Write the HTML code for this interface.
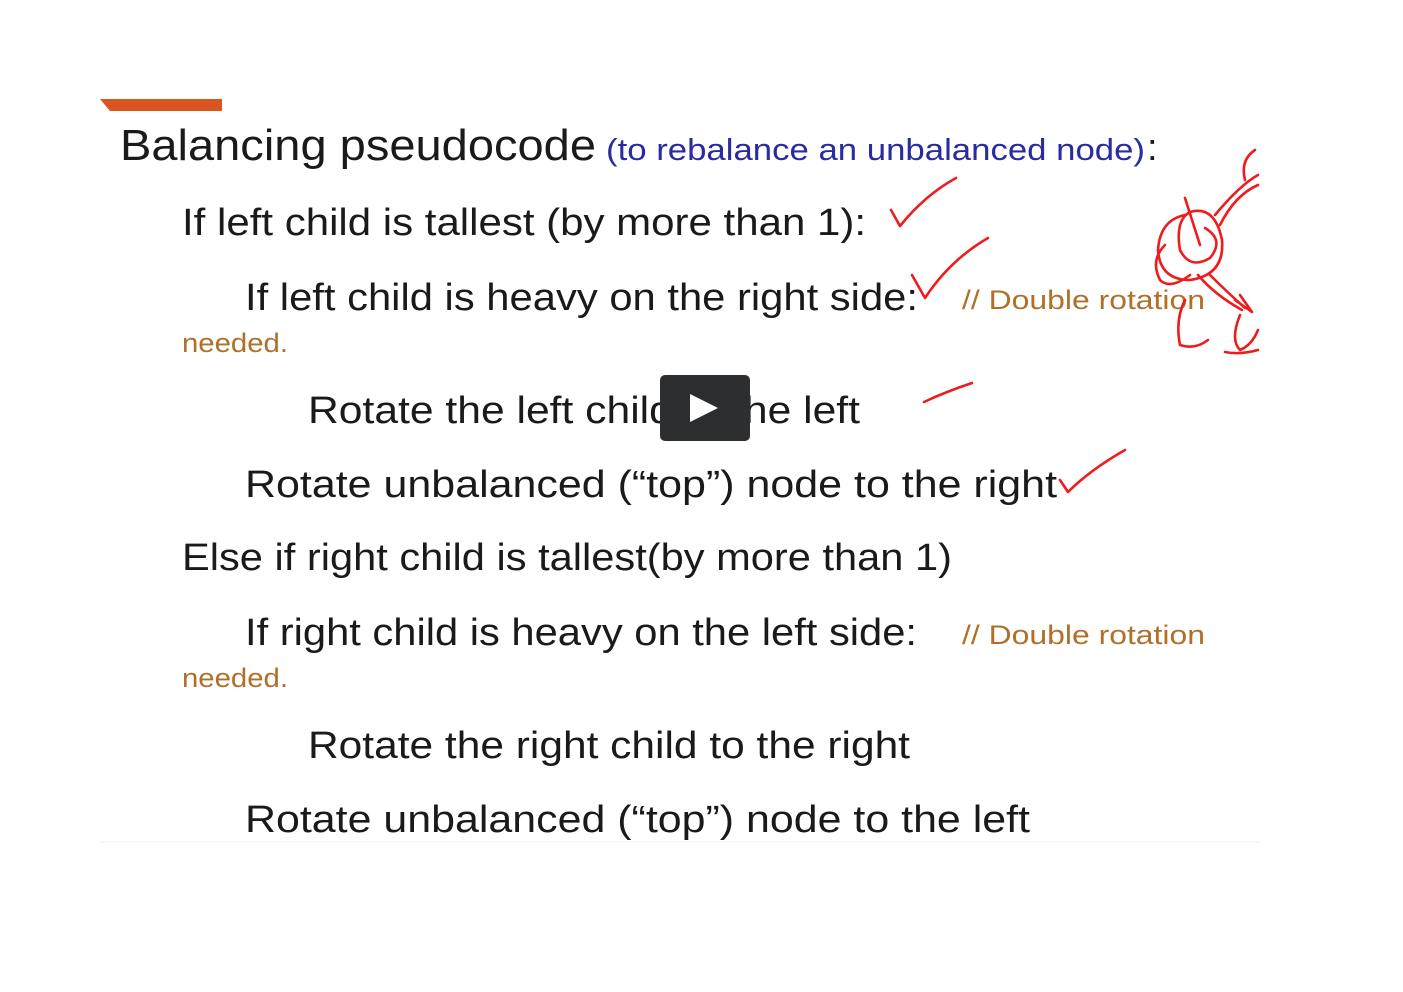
<!DOCTYPE html>
<html><head><meta charset="utf-8"><style>
html,body{margin:0;padding:0;background:#fff;width:1403px;height:992px;overflow:hidden}
svg{display:block}
text{font-family:"Liberation Sans",sans-serif}
</style></head><body>
<svg width="1403" height="992" viewBox="0 0 1403 992" xmlns="http://www.w3.org/2000/svg">
<rect width="1403" height="992" fill="#fff"/>
<line x1="100" y1="842" x2="1260" y2="842" stroke="#f2f2f2" stroke-width="1"/>
<polygon points="100,99 222,99 222,111 110,111" fill="#d9541e"/>
<g fill="#1a1a1a">
<text x="120" y="160" font-size="44" textLength="476" lengthAdjust="spacingAndGlyphs">Balancing pseudocode</text>
<text x="606" y="160" font-size="31" fill="#2b2ba0" textLength="539" lengthAdjust="spacingAndGlyphs">(to rebalance an unbalanced node)</text>
<text x="1147" y="160" font-size="38">:</text>
<text x="182" y="235" font-size="38" textLength="684" lengthAdjust="spacingAndGlyphs">If left child is tallest (by more than 1):</text>
<text x="245" y="310" font-size="38" textLength="673" lengthAdjust="spacingAndGlyphs">If left child is heavy on the right side:</text>
<text x="962" y="309" font-size="27" fill="#b0702a" textLength="243" lengthAdjust="spacingAndGlyphs">// Double rotation</text>
<text x="182" y="352" font-size="27" fill="#b0702a" textLength="106" lengthAdjust="spacingAndGlyphs">needed.</text>
<text x="308" y="423" font-size="38" textLength="552" lengthAdjust="spacingAndGlyphs">Rotate the left child to the left</text>
<text x="245" y="497" font-size="38" textLength="812" lengthAdjust="spacingAndGlyphs">Rotate unbalanced (“top”) node to the right</text>
<text x="182" y="570" font-size="38" textLength="770" lengthAdjust="spacingAndGlyphs">Else if right child is tallest(by more than 1)</text>
<text x="245" y="645" font-size="38" textLength="672" lengthAdjust="spacingAndGlyphs">If right child is heavy on the left side:</text>
<text x="962" y="644" font-size="27" fill="#b0702a" textLength="243" lengthAdjust="spacingAndGlyphs">// Double rotation</text>
<text x="182" y="687" font-size="27" fill="#b0702a" textLength="106" lengthAdjust="spacingAndGlyphs">needed.</text>
<text x="308" y="758" font-size="38" textLength="602" lengthAdjust="spacingAndGlyphs">Rotate the right child to the right</text>
<text x="245" y="832" font-size="38" textLength="785" lengthAdjust="spacingAndGlyphs">Rotate unbalanced (“top”) node to the left</text>
</g>
<clipPath id="c"><rect x="0" y="0" width="1260" height="992"/></clipPath>
<g fill="none" stroke="#ee1c1c" stroke-width="2.6" stroke-linecap="round" stroke-linejoin="round" clip-path="url(#c)">
<path d="M891 210 L900 226 Q925 195 956 178"/>
<path d="M912 275 L925 298 Q950 260 988 238"/>
<path d="M924 402 Q945 392 972 383"/>
<path d="M1060 480 L1068 492 Q1090 470 1125 450"/>
<path d="M1185 215 Q1160 220 1158 250 Q1160 280 1190 280 Q1225 275 1222 240 Q1215 205 1190 212 Q1175 220 1180 250 Q1190 270 1210 258 Q1225 240 1205 228 M1185 198 L1200 245 M1210 275 Q1225 290 1245 308 M1198 275 Q1215 295 1242 310 M1190 275 Q1170 290 1160 280 Q1150 260 1165 245 M1220 225 Q1235 195 1258 185 M1215 215 Q1240 185 1258 175 M1245 180 Q1240 160 1255 150 M1235 300 L1252 312 L1240 295 M1185 300 Q1175 320 1180 345 Q1195 350 1208 340 M1240 315 Q1230 340 1240 350 Q1252 345 1258 330 M1225 352 Q1240 355 1258 350"/>
</g>
<rect x="660" y="375" width="90" height="66" rx="5" fill="#2d2e30"/>
<polygon points="690,394 690,422 718,408" fill="#fff"/>
</svg>
</body></html>
